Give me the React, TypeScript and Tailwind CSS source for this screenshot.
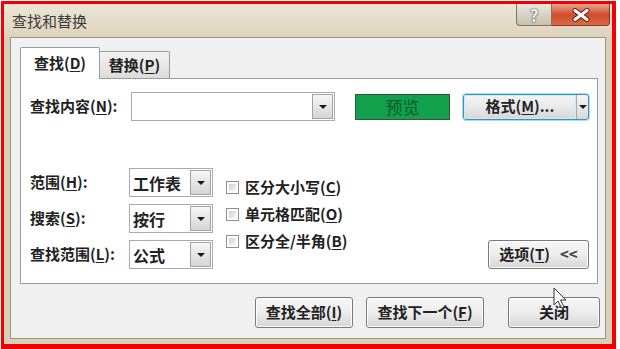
import React from 'react';

const U: React.FC<{ children: React.ReactNode }> = ({ children }) => (
  <span className="underline underline-offset-2">{children}</span>
);

const Arrow: React.FC = () => (
  <div className="w-0 h-0 border-x-[4px] border-x-transparent border-t-[4px] border-t-[#1a1a1a]" />
);

const Combo: React.FC<{ value?: string; className: string }> = ({ value, className }) => (
  <div className={`flex h-[29px] border border-[#a9abb2] bg-white ${className}`}>
    <div className="flex-1 flex items-center pl-[3px] text-[16px]">{value}</div>
    <div className="w-[21px] m-[1px] border border-[#a3a3a3] bg-gradient-to-b from-[#f6f6f6] to-[#d5d5d5] flex items-center justify-center">
      <Arrow />
    </div>
  </div>
);

const Check: React.FC<{ label: React.ReactNode }> = ({ label }) => (
  <div className="flex items-center h-[27px] gap-[6px]">
    <div className="w-[13px] h-[13px] border border-[#8e8f8f] bg-white p-[2px]">
      <div className="w-full h-full bg-gradient-to-br from-[#cdd0d5] to-[#f7f7f7]" />
    </div>
    <span className="text-[15px]">{label}</span>
  </div>
);

const Btn: React.FC<{ className: string; children: React.ReactNode }> = ({ className, children }) => (
  <div
    className={`flex items-center justify-center border border-[#7a7a7a] rounded-[3px] bg-gradient-to-b from-[#f7f7f7] via-[#ececec] to-[#d6d6d6] shadow-[inset_0_0_0_1px_#fcfcfc] text-[15px] ${className}`}
  >
    {children}
  </div>
);

const App: React.FC = () => {
  return (
    <div className="relative w-[620px] h-[349px] bg-white overflow-hidden font-['Noto_Sans_CJK_SC',sans-serif] font-semibold text-[#222]">
      <div className="ml-[1px] mt-[1px] w-[615px] h-[348px] border-t-[3px] border-l-[3px] border-r-[4px] border-b-[5px] border-[#f00000] bg-[#d9cfb9] flex flex-col">
        {/* title bar */}
        <div className="h-[33px] flex items-start bg-gradient-to-b from-[#ece5d6] to-[#ddd3be]">
          <div className="pl-[8px] pt-[7px] text-[15px] font-normal text-[#3a3a3a] leading-[20px]">查找和替换</div>
          <div className="ml-auto mr-[2px] flex h-[22px]">
            <div className="w-[36px] h-full flex items-center justify-center border border-[#7e7667] border-t-0 rounded-bl-[4px] bg-gradient-to-b from-[#ece7de] via-[#d9d2c5] to-[#c8bfae] text-[17px] leading-none font-bold text-[#f4f4f4] [text-shadow:0_0_1px_#333,0_0_2px_#555]">
              ?
            </div>
            <div className="w-[58px] h-full flex items-center justify-center border border-[#8a3a26] border-t-0 border-l-0 rounded-br-[4px] bg-gradient-to-b from-[#eaa48c] via-[#d04a2b] to-[#dc6a42]">
              <svg width="20" height="14" viewBox="0 0 20 14">
                <path d="M4 2.5 L16 11.5 M16 2.5 L4 11.5" stroke="#5a1a10" strokeWidth="5" strokeLinecap="round" />
                <path d="M4 2.5 L16 11.5 M16 2.5 L4 11.5" stroke="#ffffff" strokeWidth="3.2" strokeLinecap="round" />
              </svg>
            </div>
          </div>
        </div>

        {/* dialog body */}
        <div className="ml-[6px] mr-[6px] h-[302px] border border-[#9a958a] bg-[#f0f0f0] pt-[9px] pl-[9px] pr-[5px] flex flex-col">
          {/* tabs */}
          <div className="flex items-end h-[31px]">
            <div className="relative z-10 w-[80px] h-[32px] -mb-[1px] border border-b-0 border-[#9c9c9c] rounded-t-[2px] bg-white flex items-center justify-center text-[15px]">
              查找(<U>D</U>)
            </div>
            <div className="w-[70px] h-[27px] border border-l-0 border-b-0 border-[#9c9c9c] rounded-tr-[2px] bg-gradient-to-b from-[#f3f3f3] to-[#dcdcdc] flex items-center justify-center text-[15px]">
              替换(<U>P</U>)
            </div>
          </div>

          {/* tab panel */}
          <div className="w-[578px] h-[206px] border border-[#9c9c9c] bg-white pt-[13px] pl-[9px] flex flex-col">
            <div className="flex items-center h-[29px]">
              <div className="w-[101px] text-[15px]">
                查找内容(<U>N</U>):
              </div>
              <Combo className="w-[204px]" />
              <div className="ml-[20px] w-[95px] h-[26px] border border-[#2e5a3a] bg-[#12a04d] flex items-center justify-center text-[17px] font-normal text-[#0b5a2b]">
                预览
              </div>
              <div className="ml-[13px] w-[126px] h-[26px] rounded-[3px] border border-[#3d8fc4] shadow-[0_0_0_1px_#a9dcf6] bg-gradient-to-b from-[#f4f4f4] via-[#e9e9e9] to-[#d7d7d7] flex">
                <div className="flex-1 flex items-center justify-center text-[15px] shadow-[inset_0_0_0_1px_#c8ecfb] rounded-l-[2px]">
                  格式(<U>M</U>)...
                </div>
                <div className="w-[12px] border-l border-[#a8a8a8] flex items-center justify-center">
                  <Arrow />
                </div>
              </div>
            </div>

            <div className="mt-[47px] flex items-end">
              <div className="flex flex-col gap-[7px]">
                <div className="flex items-center">
                  <div className="w-[99px] text-[15px]">
                    范围(<U>H</U>):
                  </div>
                  <Combo value="工作表" className="w-[84px]" />
                </div>
                <div className="flex items-center">
                  <div className="w-[99px] text-[15px]">
                    搜索(<U>S</U>):
                  </div>
                  <Combo value="按行" className="w-[84px]" />
                </div>
                <div className="flex items-center">
                  <div className="w-[99px] text-[15px]">
                    查找范围(<U>L</U>):
                  </div>
                  <Combo value="公式" className="w-[84px]" />
                </div>
              </div>

              <div className="self-start mt-[6px] ml-[13px] flex flex-col">
                <Check label={<>区分大小写(<U>C</U>)</>} />
                <Check label={<>单元格匹配(<U>O</U>)</>} />
                <Check label={<>区分全/半角(<U>B</U>)</>} />
              </div>

              <Btn className="ml-auto mr-[8px] w-[101px] h-[29px] gap-[10px]">
                <span>
                  选项(<U>T</U>)
                </span>
                <span className="text-[#444]">&lt;&lt;</span>
              </Btn>
            </div>
          </div>

          {/* bottom buttons */}
          <div className="mt-[13px] flex justify-end">
            <Btn className="w-[98px] h-[31px]">
              查找全部(<U>I</U>)
            </Btn>
            <Btn className="ml-[13px] w-[118px] h-[31px]">
              查找下一个(<U>F</U>)
            </Btn>
            <Btn className="ml-[24px] w-[92px] h-[31px]">关闭</Btn>
          </div>
        </div>
      </div>

      {/* mouse cursor */}
      <svg className="absolute left-[553px] top-[287px]" width="15" height="23" viewBox="0 0 15 23">
        <path
          d="M1 1 L1 18 L5 14 L8.5 21 L11 20 L7.5 13 L13 13 Z"
          fill="#ffffff"
          stroke="#333"
          strokeWidth="1"
          strokeLinejoin="round"
        />
      </svg>
    </div>
  );
};

export default App;
